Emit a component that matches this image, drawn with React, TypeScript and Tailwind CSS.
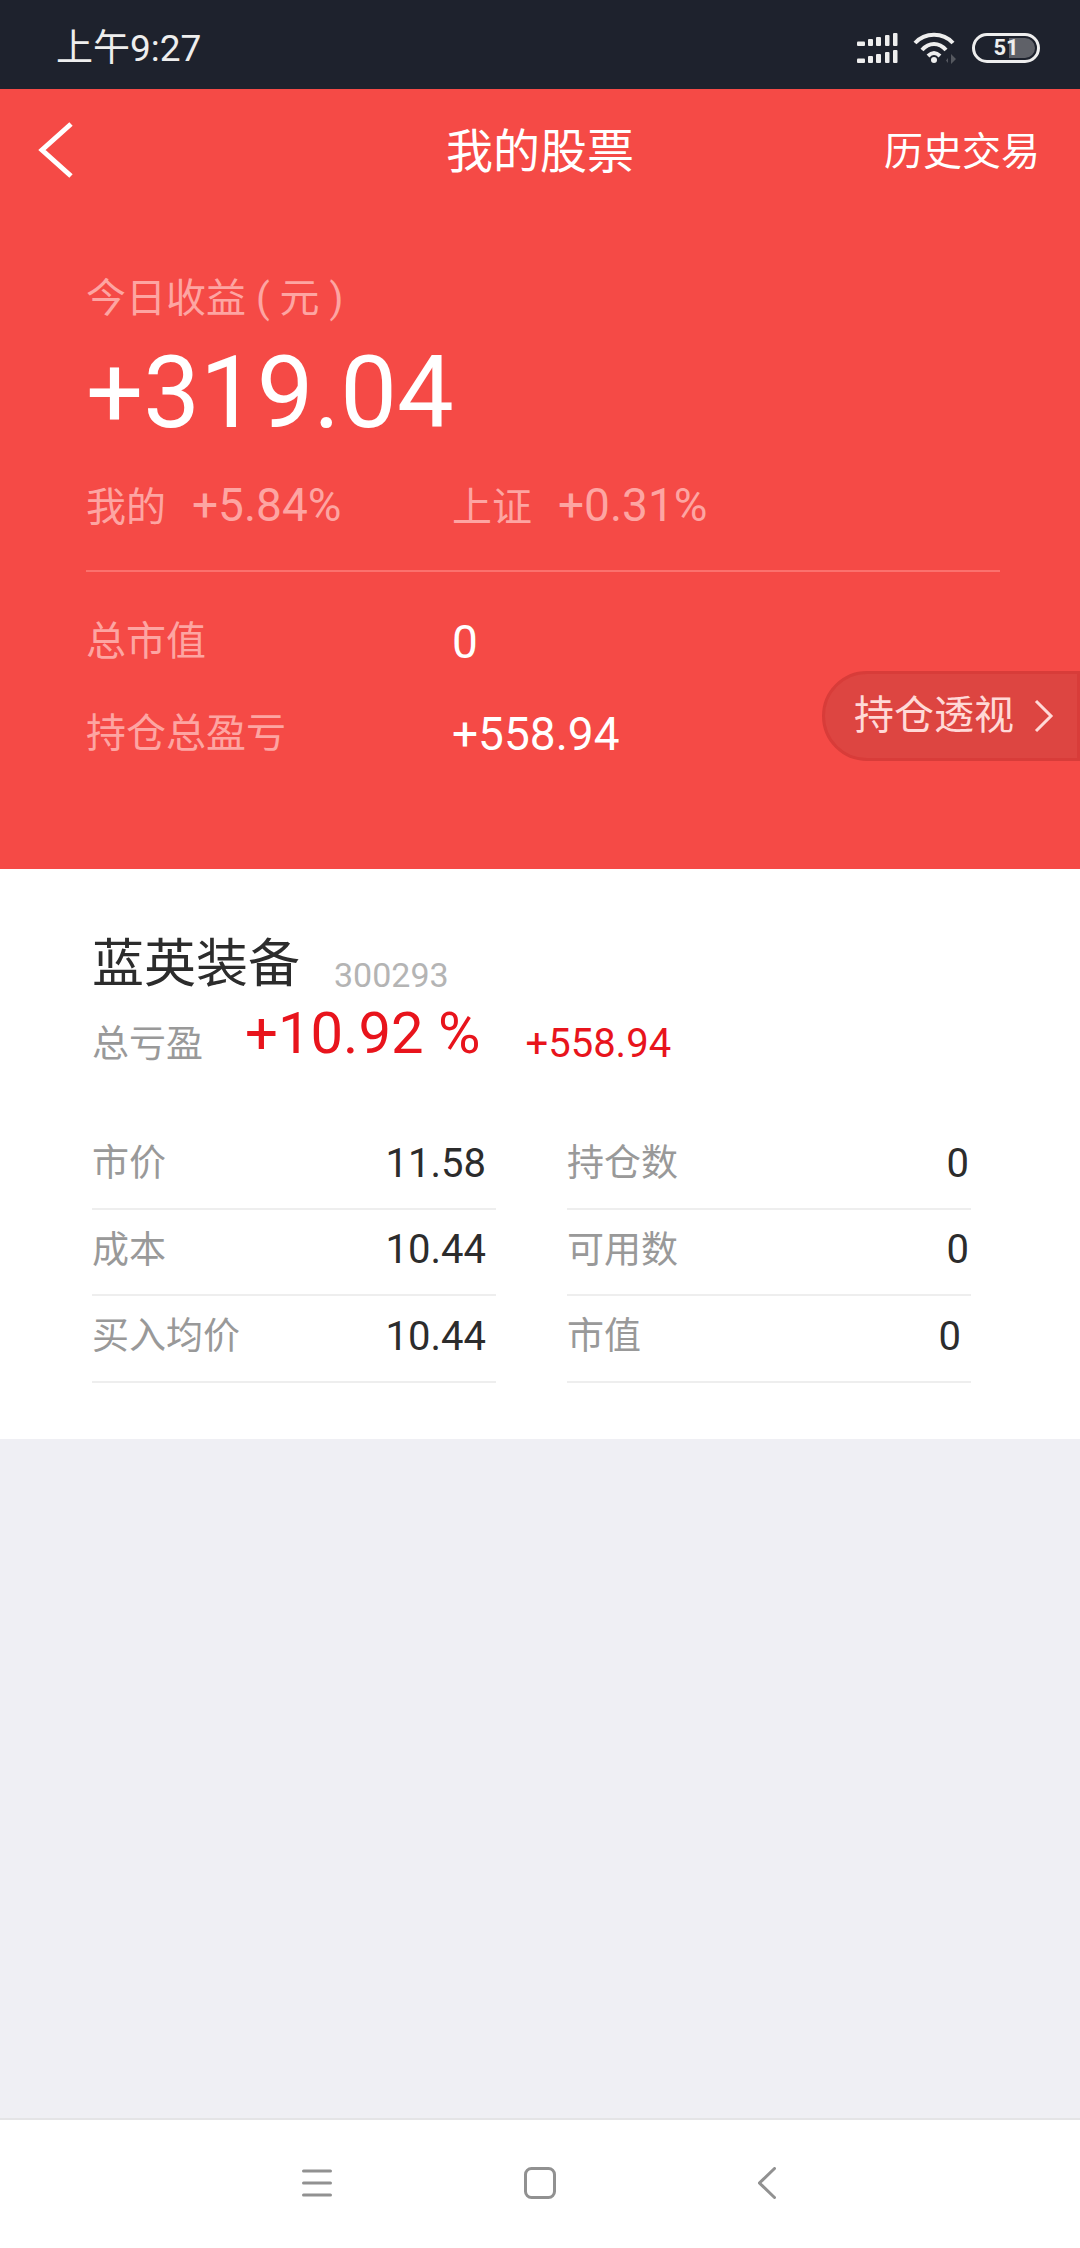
const cjk = "font-['Roboto','Noto_Sans_CJK_SC',sans-serif]";

function SignalBars() {
  const bars = [
    { x: 0, w: 8, h: 4.5 },
    { x: 11, w: 5, h: 7 },
    { x: 19, w: 5, h: 9 },
    { x: 28, w: 4.5, h: 11 },
    { x: 36, w: 4.5, h: 13 },
  ];
  return (
    <svg width="41" height="30" viewBox="0 0 41 30" fill="#eeeeee">
      {bars.map((b) => (
        <g key={b.x}>
          <rect x={b.x} y={13 - b.h} width={b.w} height={b.h} rx="1" />
          <rect x={b.x} y={30 - b.h} width={b.w} height={b.h} rx="1" />
        </g>
      ))}
    </svg>
  );
}

function WifiIcon() {
  return (
    <svg width="44" height="32" viewBox="0 0 44 32" fill="none">
      <g stroke="#eeeeee" strokeWidth="4">
        <path d="M2 11C12 0 30 0 40 11" />
        <path d="M9 18C16 10 26 10 33 18" />
        <path d="M15 24C19 20 23 20 27 24" />
      </g>
      <circle cx="21" cy="28" r="3" fill="#eeeeee" />
      <path d="M35 26L33 28.5L35 31ZM38 22V32L43 27Z" fill="#55585f" />
    </svg>
  );
}

function Battery() {
  return (
    <div className="relative flex h-[30px] w-[68px] items-center justify-center overflow-hidden rounded-full border-[3px] border-[#eeeeee]">
      <div className="absolute bottom-[2px] right-[2px] top-[2px] w-[26px] rounded-r-full bg-[#5f6168]" />
      <span className="relative text-[22px] font-bold leading-none text-[#eeeeee]">51</span>
    </div>
  );
}

function StatCell({ label, value, inset }: { label: string; value: string; inset: string }) {
  return (
    <div className={`flex h-[86.5px] items-center justify-between border-b-2 border-[#eeeeee] pb-[3px] ${inset}`}>
      <span className="text-[37px] leading-none text-[#999999]">{label}</span>
      <span className="text-[40px] leading-none text-[#2c2c2c]">{value}</span>
    </div>
  );
}

export default function App() {
  return (
    <div className={`flex h-[2248px] w-[1080px] flex-col overflow-hidden bg-[#efeff4] ${cjk}`}>
      {/* Status bar */}
      <div className="flex h-[89px] items-center justify-between bg-[#1e222d] pl-[56px] pr-[40px] pt-[7px]">
        <span className="text-[37px] leading-none text-[#eeeeee]">上午9:27</span>
        <div className="flex items-center gap-[15px]">
          <SignalBars />
          <WifiIcon />
          <Battery />
        </div>
      </div>

      {/* Red header */}
      <div className="relative h-[780px] bg-[#f54a46]">
        <div className="relative flex h-[124px] items-center justify-between pl-[38px] pr-[40px]">
          <svg className="mb-[3px]" width="36" height="56" viewBox="0 0 36 56" fill="none" stroke="#fff" strokeWidth="5">
            <path d="M33 2L4 28L33 54" />
          </svg>
          <span className="absolute left-0 right-0 top-[31px] text-center text-[47px] leading-[64px] text-white">我的股票</span>
          <span className="mt-[2px] text-[39px] leading-none text-white">历史交易</span>
        </div>

        <div className="px-[86px] pt-[60px]">
          <div className="text-[40px] leading-[52px] text-[#fda5a2]">今日收益 ( 元 )</div>
          <div className="mt-[13px] text-[101px] leading-[110px] text-white">+319.04</div>
          <div className="mt-[32px] flex h-[50px] items-center text-[40px] text-[#fda5a2]">
            <span className="w-[366px]">
              我的<span className="ml-[26px] text-[46px]">+5.84%</span>
            </span>
            <span>
              上证<span className="ml-[26px] text-[46px]">+0.31%</span>
            </span>
          </div>
          <div className="mt-[40px] h-[2px] w-[914px] bg-[#fb716d]" />
          <div className="mt-[45px] flex h-[50px] items-center">
            <span className="w-[366px] text-[40px] text-[#fda5a2]">总市值</span>
            <span className="text-[46px] text-white">0</span>
          </div>
          <div className="mt-[42px] flex h-[50px] items-center">
            <span className="w-[366px] text-[40px] text-[#fda5a2]">持仓总盈亏</span>
            <span className="text-[46px] text-white">+558.94</span>
          </div>
        </div>

        {/* Holdings pill */}
        <div className="absolute right-0 top-[582px] flex h-[90px] w-[258px] items-center rounded-l-full border-[3px] border-[#d83c39] bg-[#dd4541] pl-[29px]">
          <span className="text-[40px] leading-none text-[#ffd9d7]">持仓透视</span>
          <svg className="ml-[20px]" width="20" height="34" viewBox="0 0 20 34" fill="none" stroke="#ffd9d7" strokeWidth="3">
            <path d="M2 2L17 17L2 32" />
          </svg>
        </div>
      </div>

      {/* Stock card */}
      <div className="h-[570px] bg-white pl-[92px] pr-[109px] pt-[66px]">
        <div className="flex items-end">
          <span className="text-[52px] leading-[60px] text-[#2c2c2c]">蓝英装备</span>
          <span className="mb-[3px] ml-[34px] text-[34px] leading-none text-[#b4b4b4]">300293</span>
        </div>
        <div className="flex h-[76px] items-center">
          <span className="mt-[22px] text-[37px] leading-none text-[#999999]">总亏盈</span>
          <span className="ml-[42px] text-[58px] leading-none text-[#e8141c]">+10.92 %</span>
          <span className="ml-[45px] mt-[22px] text-[40px] leading-none text-[#e8141c]">+558.94</span>
        </div>
        <div className="mt-[52px] grid grid-cols-[404px_404px] gap-x-[71px]">
          <StatCell label="市价" value="11.58" inset="pr-[10px]" />
          <StatCell label="持仓数" value="0" inset="pr-[2px]" />
          <StatCell label="成本" value="10.44" inset="pr-[10px]" />
          <StatCell label="可用数" value="0" inset="pr-[2px]" />
          <StatCell label="买入均价" value="10.44" inset="pr-[10px]" />
          <StatCell label="市值" value="0" inset="pr-[10px]" />
        </div>
      </div>

      <div className="flex-1" />

      {/* Navigation bar */}
      <div className="flex h-[130px] items-center justify-center border-t-2 border-[#e4e4e6] bg-white pb-[2px] pr-[3px]">
        <svg width="30" height="30" viewBox="0 0 30 30" fill="none" stroke="#919191" strokeWidth="3" strokeLinecap="round">
          <path d="M1.5 3H28.5M1.5 15H28.5M1.5 27H28.5" />
        </svg>
        <svg className="ml-[192px]" width="32" height="32" viewBox="0 0 32 32" fill="none" stroke="#919191" strokeWidth="3">
          <rect x="1.5" y="1.5" width="29" height="29" rx="6" />
        </svg>
        <svg className="ml-[202px]" width="18" height="32" viewBox="0 0 18 32" fill="none" stroke="#919191" strokeWidth="3" strokeLinecap="round">
          <path d="M16.5 1.5L1.5 16L16.5 30.5" />
        </svg>
      </div>
    </div>
  );
}
